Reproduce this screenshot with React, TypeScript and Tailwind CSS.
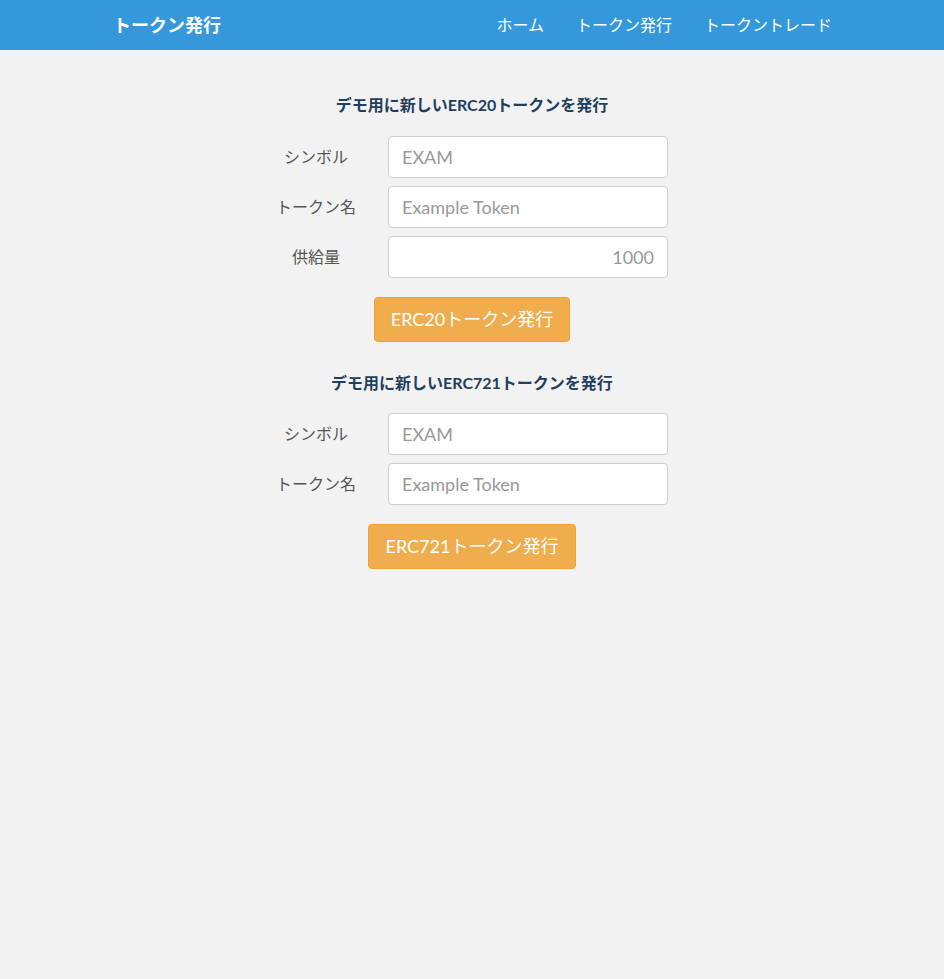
import React from "react";

const font = { fontFamily: "Lato, 'Noto Sans CJK JP', sans-serif" };

function Row({ label, placeholder, right }: { label: string; placeholder: string; right?: boolean }) {
  return (
    <div className="flex items-center">
      <label className="w-[144px] text-center text-[16px] text-[#555]">{label}</label>
      <input
        placeholder={placeholder}
        className={`w-[280px] h-[42px] rounded-[4px] border border-[#cfcfcf] bg-white px-[13px] text-[18px] text-[#333] placeholder:text-[#999] outline-none ${right ? "text-right" : ""}`}
        style={font}
      />
    </div>
  );
}

export default function App() {
  return (
    <div className="min-h-[979px] bg-[#f2f2f2]" style={font}>
      <nav className="h-[50px] bg-[#3498db]">
        <div className="mx-auto flex h-full w-[750px] items-center justify-between px-[15px]">
          <span className="text-[18px] font-bold text-white pl-[1px]">トークン発行</span>
          <div className="flex items-center gap-[32px] text-[16px] text-white">
            <span>ホーム</span>
            <span>トークン発行</span>
            <span>トークントレード</span>
          </div>
        </div>
      </nav>

      <div className="pt-[44px]">
        <h2 className="text-center text-[16px] font-bold text-[#1f3f5e] leading-[22px]">デモ用に新しいERC20トークンを発行</h2>
        <div className="mx-auto mt-[20px] flex w-[456px] flex-col gap-[8px]">
          <Row label="シンボル" placeholder="EXAM" />
          <Row label="トークン名" placeholder="Example Token" />
          <Row label="供給量" placeholder="1000" right />
        </div>
        <div className="mt-[19px] flex justify-center">
          <button className="h-[45px] rounded-[4px] border border-[#eea236] bg-[#f0ad4e] px-[16px] text-[18px] text-white" style={font}>
            ERC20トークン発行
          </button>
        </div>

        <h2 className="mt-[30px] text-center text-[16px] font-bold text-[#1f3f5e] leading-[22px]">デモ用に新しいERC721トークンを発行</h2>
        <div className="mx-auto mt-[19px] flex w-[456px] flex-col gap-[8px]">
          <Row label="シンボル" placeholder="EXAM" />
          <Row label="トークン名" placeholder="Example Token" />
        </div>
        <div className="mt-[19px] flex justify-center">
          <button className="h-[45px] rounded-[4px] border border-[#eea236] bg-[#f0ad4e] px-[17px] text-[18px] text-white" style={font}>
            ERC721トークン発行
          </button>
        </div>
      </div>
    </div>
  );
}
